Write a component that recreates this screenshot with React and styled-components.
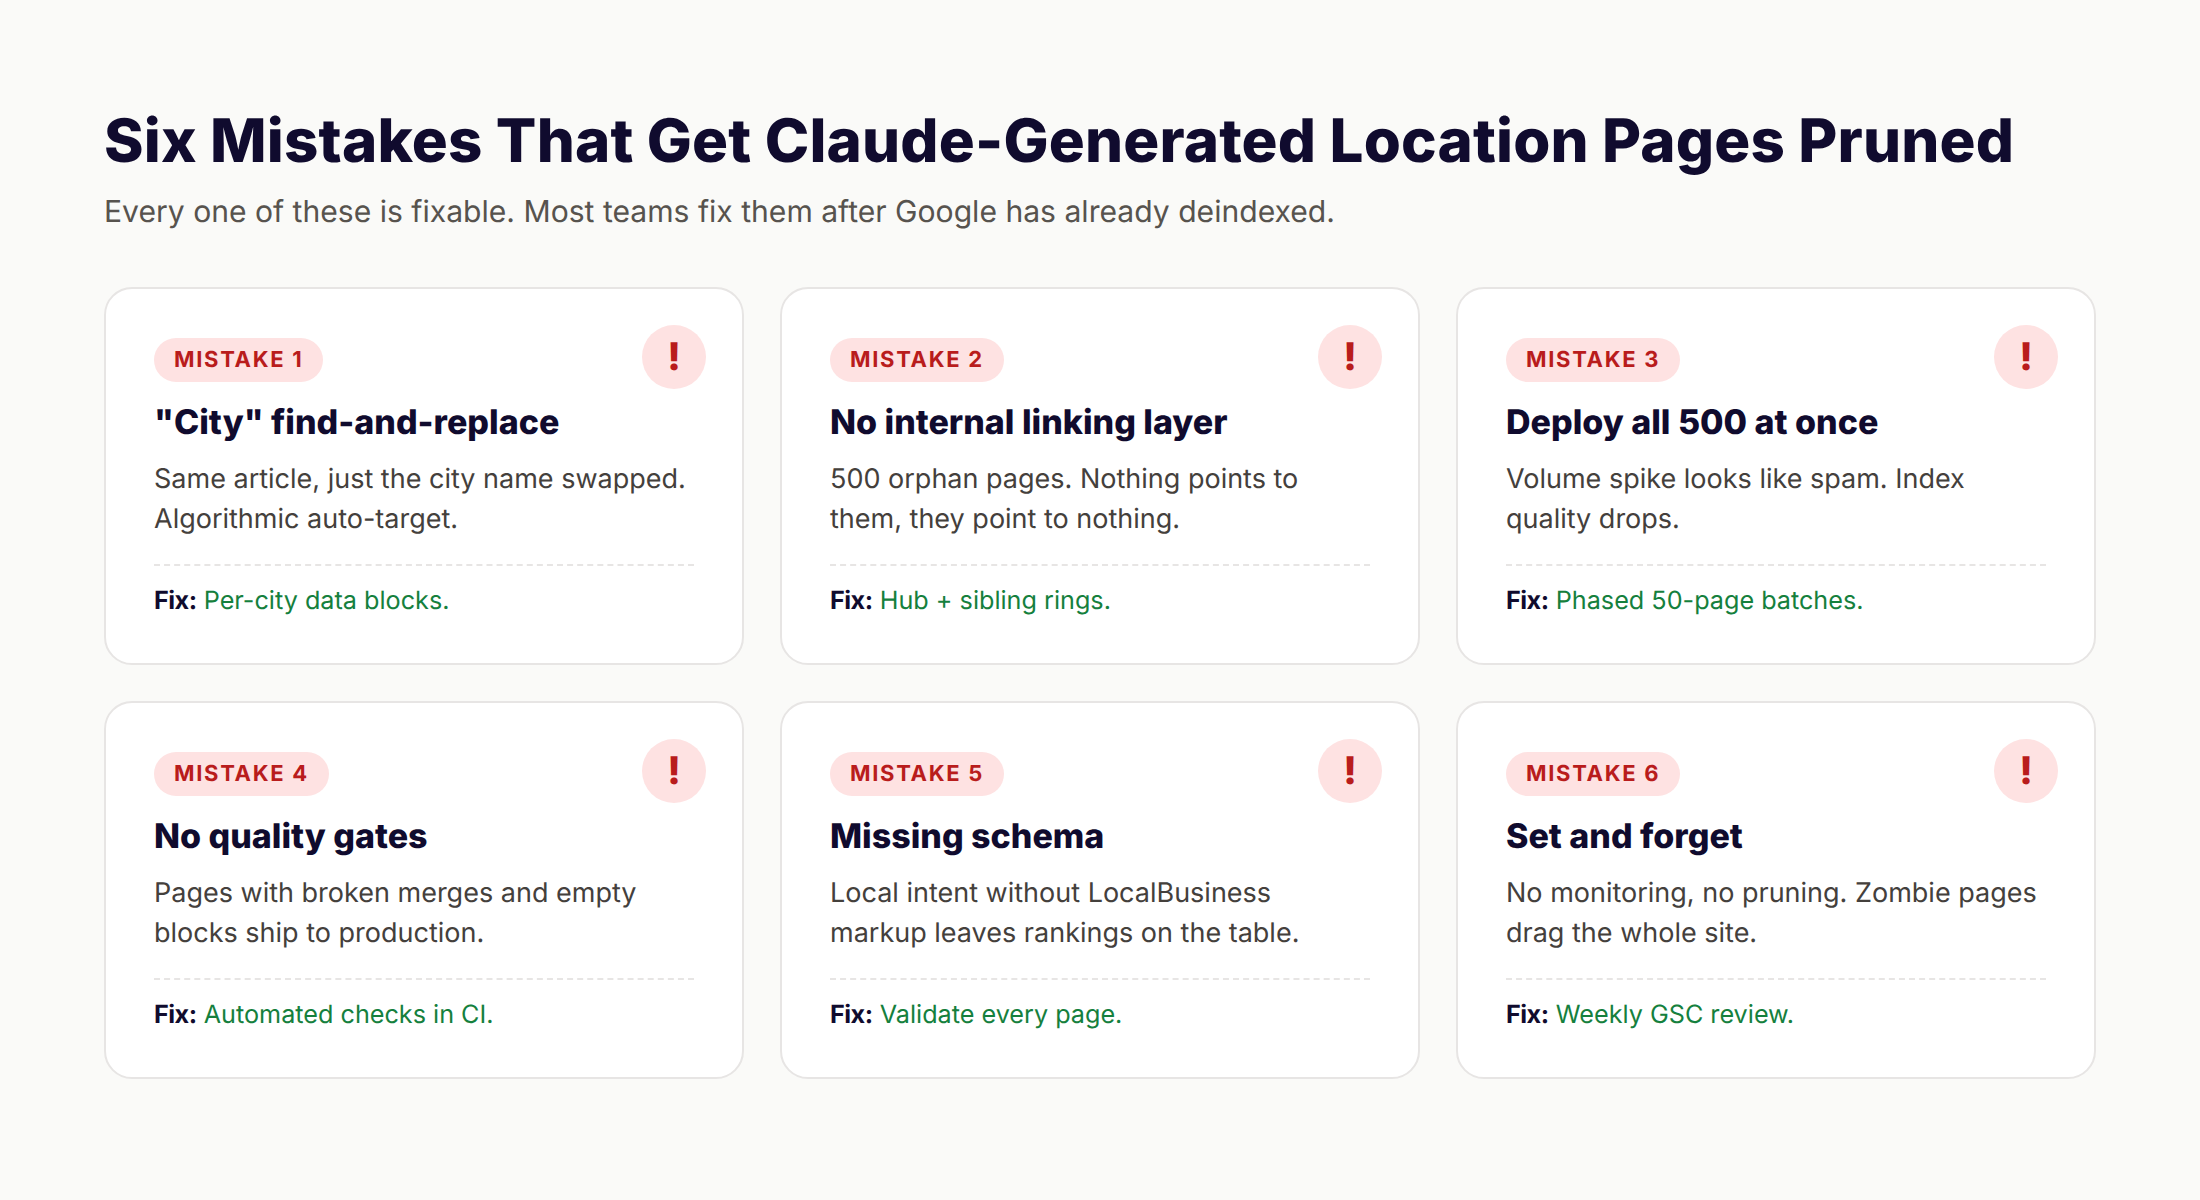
import React from 'react';
import styled, { createGlobalStyle } from 'styled-components';

const GlobalStyle = createGlobalStyle`
  html, body {
    margin: 0;
    padding: 0;
    background: #fafaf8;
  }
  * {
    box-sizing: border-box;
  }
`;

const mistakes = [
  {
    id: 1,
    title: '"City" find-and-replace',
    desc: 'Same article, just the city name swapped. Algorithmic auto-target.',
    fix: 'Per-city data blocks.',
  },
  {
    id: 2,
    title: 'No internal linking layer',
    desc: '500 orphan pages. Nothing points to them, they point to nothing.',
    fix: 'Hub + sibling rings.',
  },
  {
    id: 3,
    title: 'Deploy all 500 at once',
    desc: 'Volume spike looks like spam. Index quality drops.',
    fix: 'Phased 50-page batches.',
  },
  {
    id: 4,
    title: 'No quality gates',
    desc: 'Pages with broken merges and empty blocks ship to production.',
    fix: 'Automated checks in CI.',
  },
  {
    id: 5,
    title: 'Missing schema',
    desc: 'Local intent without LocalBusiness markup leaves rankings on the table.',
    fix: 'Validate every page.',
  },
  {
    id: 6,
    title: 'Set and forget',
    desc: 'No monitoring, no pruning. Zombie pages drag the whole site.',
    fix: 'Weekly GSC review.',
  },
];

function App() {
  return (
    <Page>
      <GlobalStyle />
      <Title>Six Mistakes That Get Claude-Generated Location Pages Pruned</Title>
      <Subtitle>
        Every one of these is fixable. Most teams fix them after Google has
        already deindexed.
      </Subtitle>
      <Grid>
        {mistakes.map((item) => (
          <Card key={item.id}>
            <Alert>!</Alert>
            <Tag>MISTAKE {item.id}</Tag>
            <CardTitle>{item.title}</CardTitle>
            <Desc>{item.desc}</Desc>
            <Fix>
              <FixLabel>Fix:</FixLabel> {item.fix}
            </Fix>
          </Card>
        ))}
      </Grid>
    </Page>
  );
}

export default App;

const Page = styled.div`
  width: 2200px;
  height: 1200px;
  padding: 105px 104px 0;
  font-family: Inter, 'Liberation Sans', sans-serif;
  text-rendering: geometricPrecision;
  background: #fafaf8;
`;

const Title = styled.h1`
  margin: 0;
  font-size: 60px;
  line-height: 72px;
  font-weight: 800;
  letter-spacing: 0.17px;
  color: #100b2e;
`;

const Subtitle = styled.p`
  margin: 15px 0 0;
  font-size: 30.1px;
  line-height: 40px;
  font-weight: 400;
  color: #57534e;
`;

const Grid = styled.div`
  display: grid;
  grid-template-columns: repeat(3, 640px);
  gap: 36px;
  margin-top: 55px;
`;

const Card = styled.div`
  position: relative;
  height: 378px;
  padding: 49px 48px 0;
  background: #ffffff;
  border: 2px solid #e7e5e4;
  border-radius: 28px;
`;

const Alert = styled.div`
  position: absolute;
  top: 36px;
  right: 36px;
  width: 64px;
  height: 64px;
  display: flex;
  align-items: center;
  justify-content: center;
  border-radius: 50%;
  font-size: 38px;
  font-weight: 800;
  color: #b91c1c;
  background: #fee2e2;
`;

const Tag = styled.span`
  display: inline-block;
  padding: 0 20px;
  font-size: 22px;
  line-height: 44px;
  font-weight: 700;
  letter-spacing: 1.7px;
  color: #b91c1c;
  background: #fee2e2;
  border-radius: 22px;
`;

const CardTitle = styled.h3`
  margin: 17px 0 0;
  font-size: 34px;
  line-height: 48px;
  font-weight: 790;
  color: #100b2e;
`;

const Desc = styled.p`
  margin: 12px 0 0;
  font-size: 27px;
  line-height: 40px;
  color: #44403c;
`;

const Fix = styled.div`
  margin-top: 25px;
  padding-top: 17px;
  border-top: 2px dashed #e7e5e4;
  font-size: 25.2px;
  line-height: 36px;
  color: #15803d;
`;

const FixLabel = styled.strong`
  font-weight: 700;
  letter-spacing: -0.5px;
  color: #100b2e;
`;
